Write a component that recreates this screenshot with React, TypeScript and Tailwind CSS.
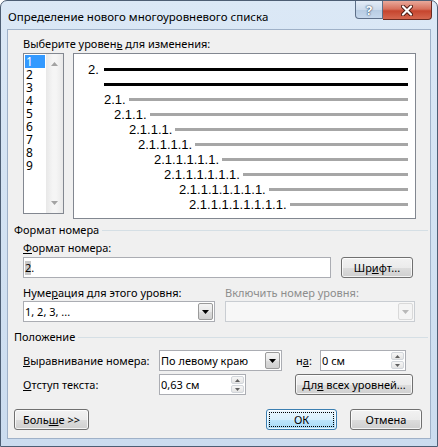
import React from 'react'

const ui = "font-['Noto_Sans',sans-serif] text-[11px] leading-[14px] text-black"

const btnNormal =
  'border-[#707070] bg-[linear-gradient(to_bottom,#f2f2f2_0%,#ebebeb_50%,#dddddd_51%,#cfcfcf_100%)]'
const btnFocus =
  'border-[#3c7fb1] bg-[linear-gradient(to_bottom,#eaf6fd_0%,#d9f0fc_50%,#bee6fd_51%,#a7d9f5_100%)]'

function Btn({ children, className = '', focused = false }: { children: React.ReactNode; className?: string; focused?: boolean }) {
  return (
    <div
      className={`relative flex items-center justify-center rounded-[3px] border shadow-[inset_0_0_0_1px_rgba(255,255,255,0.75)] ${focused ? btnFocus : btnNormal} ${className}`}
    >
      {focused && <span className="absolute inset-[2px] border border-dotted border-black" />}
      <span>{children}</span>
    </div>
  )
}

function Arrow({ up = false, color = '#000' }: { up?: boolean; color?: string }) {
  return (
    <svg width="7" height="4" viewBox="0 0 7 4">
      <path d={up ? 'M0 4 L3.5 0 L7 4 Z' : 'M0 0 L7 0 L3.5 4 Z'} fill={color} />
    </svg>
  )
}

function DropBtn({ disabled = false }: { disabled?: boolean }) {
  return (
    <div
      className={`m-px flex w-[15px] items-center justify-center rounded-[2px] border ${disabled ? 'border-[#d9d9d9] bg-[#f4f4f4]' : 'border-[#9a9a9a] bg-[linear-gradient(to_bottom,#f4f4f4_0%,#e8e8e8_50%,#dcdcdc_51%,#d0d0d0_100%)]'}`}
    >
      <Arrow color={disabled ? '#b8b8b8' : '#000'} />
    </div>
  )
}

function Spin() {
  return (
    <div className="m-px flex w-[13px] flex-col gap-px">
      <div className="flex flex-1 items-center justify-center rounded-[2px] border border-[#d2d6db] bg-[linear-gradient(to_bottom,#f6f6f6,#e4e4e4)]">
        <svg width="5" height="3" viewBox="0 0 5 3"><path d="M0 3 L2.5 0 L5 3 Z" fill="#606060" /></svg>
      </div>
      <div className="flex flex-1 items-center justify-center rounded-[2px] border border-[#d2d6db] bg-[linear-gradient(to_bottom,#f6f6f6,#e4e4e4)]">
        <svg width="5" height="3" viewBox="0 0 5 3"><path d="M0 0 L5 0 L2.5 3 Z" fill="#606060" /></svg>
      </div>
    </div>
  )
}

function GroupHead({ title }: { title: string }) {
  return (
    <div className="ml-[6px] mr-[2px] flex h-[14px] items-center">
      <span>{title}</span>
      <div className="ml-[3px] h-px flex-1 bg-[#d5dfe5]" />
    </div>
  )
}

const levels = [
  { t: '2.1.', pl: 'pl-[30px]' },
  { t: '2.1.1.', pl: 'pl-[40px]' },
  { t: '2.1.1.1.', pl: 'pl-[55px]' },
  { t: '2.1.1.1.1.', pl: 'pl-[64px]' },
  { t: '2.1.1.1.1.1.', pl: 'pl-[80px]' },
  { t: '2.1.1.1.1.1.1.', pl: 'pl-[90px]' },
  { t: '2.1.1.1.1.1.1.1.', pl: 'pl-[105px]' },
  { t: '2.1.1.1.1.1.1.1.1.', pl: 'pl-[115px]' },
]

export default function App() {
  return (
    <div className={`${ui} h-[447px] w-[438px] overflow-hidden`}>
      <div className="flex h-full flex-col rounded-t-[7px] border border-[#4d5e74] bg-[linear-gradient(to_bottom,#dbe8f6_0%,#d4e3f3_40%,#cbdcef_100%)] px-[6px] pb-[7px]">
        {/* title bar */}
        <div className="flex h-[28px] items-start">
          <span className="ml-px mt-[8px] text-[11.5px] leading-[16px]">Определение нового многоуровневого списка</span>
          <div className="ml-auto mr-[-1px] flex">
            <div className="flex h-[18px] w-[28px] items-center justify-center rounded-bl-[4px] border border-t-0 border-[#5d6f88] bg-[linear-gradient(to_bottom,#e3ecf7_0%,#cddbec_50%,#b7cbe2_51%,#c6d8ec_100%)] text-[13px] font-bold text-white [text-shadow:0_0_2px_#26405f,0_0_1px_#26405f]">
              ?
            </div>
            <div className="flex h-[19px] w-[49px] items-center justify-center rounded-br-[4px] border border-l-0 border-t-0 border-[#6b2a20] bg-[linear-gradient(to_bottom,#e9a99b_0%,#d7705c_45%,#c6452e_55%,#d5674f_100%)]">
              <svg width="12" height="11" viewBox="0 0 12 11">
                <path d="M2 1.5 L10 9.5 M10 1.5 L2 9.5" stroke="#4a1a12" strokeWidth="4" strokeLinecap="round" />
                <path d="M2 1.5 L10 9.5 M10 1.5 L2 9.5" stroke="#fff" strokeWidth="2.2" strokeLinecap="round" />
              </svg>
            </div>
          </div>
        </div>

        {/* client area */}
        <div className="flex flex-1 flex-col border border-[#9fb1c8] bg-[#f0f0f0]">
          <div className="ml-[15px] mt-[7px] h-[14px]">
            Выберите уровен<u>ь</u> для изменения:
          </div>

          <div className="mt-[2px] flex items-start">
            {/* level list */}
            <div className="ml-[15px] flex h-[161px] w-[41px] border border-[#828790] bg-white">
              <div className="flex w-[22px] flex-col pt-px text-[12px]">
                {['1', '2', '3', '4', '5', '6', '7', '8', '9'].map((n, i) => (
                  <div
                    key={n}
                    className={`ml-px h-[13px] w-[20px] pl-px leading-[13px] ${i === 0 ? 'bg-[#3399ff] text-white' : ''}`}
                  >
                    {n}
                  </div>
                ))}
              </div>
              <div className="flex w-[17px] flex-col items-center justify-between bg-[linear-gradient(to_right,#e8e8e8,#f5f5f5_40%,#f5f5f5_60%,#e8e8e8)] py-[8px]">
                <Arrow up color="#a3a3a3" />
                <Arrow color="#a3a3a3" />
              </div>
            </div>

            {/* preview */}
            <div className="ml-[9px] flex h-[166px] w-[343px] flex-col border border-[#828790] bg-white pr-[7px] pt-[8px] font-['Liberation_Sans',Arial,sans-serif] text-[13px]">
              <div className="flex h-[15px] items-center pl-[14px]">
                <span className="w-[16px]">2.</span>
                <div className="h-[3px] flex-1 bg-black" />
              </div>
              <div className="flex h-[15px] items-center pl-[30px]">
                <div className="h-[3px] flex-1 bg-black" />
              </div>
              {levels.map((l) => (
                <div key={l.t} className={`flex h-[15px] items-center ${l.pl}`}>
                  <span>{l.t}</span>
                  <div className="ml-[3px] h-[3px] flex-1 bg-[#a6a6a6]" />
                </div>
              ))}
            </div>
          </div>

          <div className="mt-[4px]">
            <GroupHead title="Формат номера" />
          </div>

          <div className="ml-[15px] mt-[4px] h-[14px]">
            <u>Ф</u>ормат номера:
          </div>
          <div className="mt-[2px] flex h-[21px] items-stretch">
            <div className="ml-[15px] flex w-[308px] items-center border border-[#abadb3] bg-white pl-px">
              <span className="bg-[#c8c8c8]">2</span>.
            </div>
            <Btn className="ml-[10px] w-[72px]">
              Шр<u>и</u>фт...
            </Btn>
          </div>

          <div className="mt-[8px] flex h-[14px]">
            <div className="ml-[15px] w-[202px]">
              Нуме<u>р</u>ация для этого уровня:
            </div>
            <div className="text-[#8d8d8d]">Включить номер уровня:</div>
          </div>
          <div className="mt-px flex h-[21px]">
            <div className="ml-[15px] flex w-[192px] border border-[#abadb3] bg-white">
              <div className="flex flex-1 items-center pl-px">1, 2, 3, ...</div>
              <DropBtn />
            </div>
            <div className="ml-[10px] flex w-[190px] border border-[#c9cdd2] bg-[#f7f7f7]">
              <div className="flex-1" />
              <DropBtn disabled />
            </div>
          </div>

          <div className="mt-[8px]">
            <GroupHead title="Положение" />
          </div>

          <div className="mt-[6px] flex h-[21px] items-stretch">
            <div className="ml-[15px] flex w-[136px] items-center">
              <span>
                <u>В</u>ыравнивание номера:
              </span>
            </div>
            <div className="flex w-[123px] border border-[#abadb3] bg-white">
              <div className="flex flex-1 items-center pl-px">По левому краю</div>
              <DropBtn />
            </div>
            <div className="ml-[14px] flex w-[24px] items-center">
              <span>
                н<u>а</u>:
              </span>
            </div>
            <div className="flex w-[86px] border border-[#abadb3] bg-white">
              <div className="flex flex-1 items-center pl-px">0 см</div>
              <Spin />
            </div>
          </div>

          <div className="mt-[3px] flex h-[21px] items-stretch">
            <div className="ml-[15px] flex w-[136px] items-center">
              <span>
                <u>О</u>тступ текста:
              </span>
            </div>
            <div className="flex w-[87px] border border-[#abadb3] bg-white">
              <div className="flex flex-1 items-center pl-px">0,63 см</div>
              <Spin />
            </div>
            <Btn className="ml-[49px] w-[118px]">
              Дл<u>я</u> всех уровней...
            </Btn>
          </div>

          <div className="mt-[14px] flex h-[21px]">
            <Btn className="ml-[6px] w-[75px]">
              Боль<u>ш</u>е &gt;&gt;
            </Btn>
            <Btn focused className="ml-auto w-[71px]">
              ОК
            </Btn>
            <Btn className="ml-[13px] mr-[8px] w-[72px]">Отмена</Btn>
          </div>
        </div>
      </div>
    </div>
  )
}
